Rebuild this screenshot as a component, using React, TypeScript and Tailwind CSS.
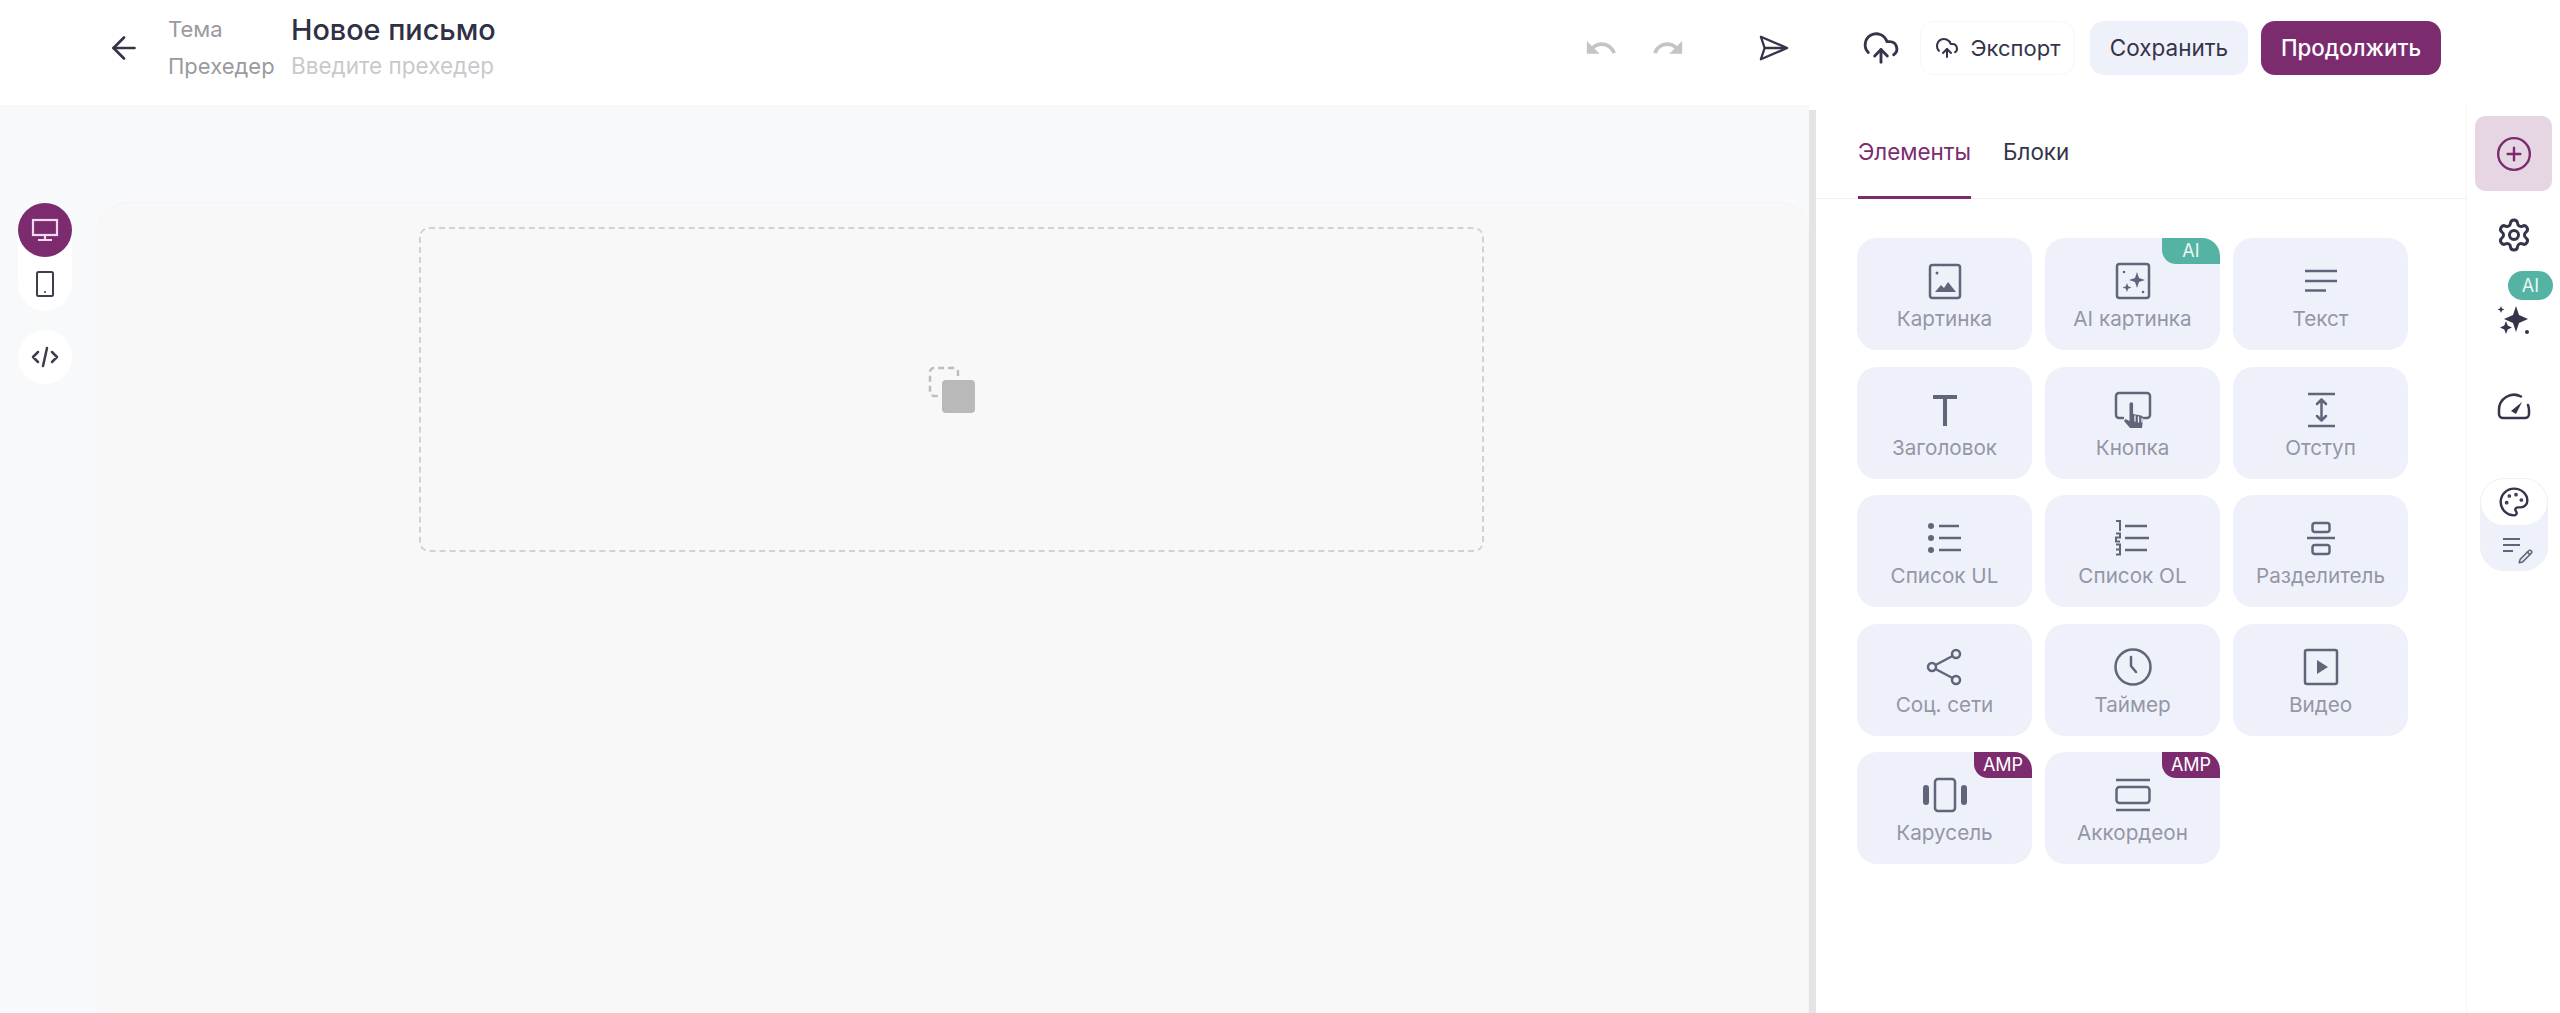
import React from 'react';
import { ArrowLeft, CloudUpload, CirclePlus, Settings, Palette, Pencil } from 'lucide-react';
import { MdUndo, MdRedo } from 'react-icons/md';

const ico = { fill: 'none', stroke: 'currentColor', strokeWidth: 2.5, strokeLinecap: 'round' as const, strokeLinejoin: 'round' as const };

const Svg: React.FC<{ children: React.ReactNode }> = ({ children }) => (
  <svg width="40" height="40" viewBox="0 0 40 40" {...ico}>{children}</svg>
);

const tileIcons: Record<string, React.ReactNode> = {
  image: (
    <Svg>
      <rect x="5" y="4" width="30" height="33" rx="2.5" />
      <circle cx="12" cy="12" r="1.5" fill="currentColor" stroke="none" />
      <path d="M10 31l6-7 3 3 4-6 8 10z" fill="currentColor" stroke="none" />
    </Svg>
  ),
  aiImage: (
    <Svg>
      <rect x="4" y="3" width="32" height="34" rx="2.5" />
      <path d="M24 11l2 6 6 2-6 2-2 6-2-6-6-2 6-2z" fill="currentColor" stroke="none" />
      <path d="M14 22l1.2 3.3 3.3 1.2-3.3 1.2L14 31l-1.2-3.3-3.3-1.2 3.3-1.2z" fill="currentColor" stroke="none" />
      <circle cx="11" cy="11" r="1.3" fill="currentColor" stroke="none" />
      <circle cx="30" cy="31" r="1.3" fill="currentColor" stroke="none" />
    </Svg>
  ),
  text: (
    <Svg>
      <path d="M4 10h32M4 20h32M4 29.500h21" strokeLinecap="butt" />
    </Svg>
  ),
  heading: (
    <Svg>
      <path d="M8 7h24M20 7v29" strokeWidth="4" strokeLinecap="butt" />
    </Svg>
  ),
  button: (
    <Svg>
      <path d="M10 28H6a3 3 0 0 1-3-3V6a3 3 0 0 1 3-3h28a3 3 0 0 1 3 3v19a3 3 0 0 1-3 3h-3" />
      <path d="M17 38l-6-7 1.500-2 4 2V14a1.800 1.800 0 0 1 3.600 0v10l8 1.500c1.500.3 2.200 1.500 2 3L29 38z" fill="currentColor" stroke="none" />
      <path d="M22 31v-5M25.500 32v-5M29 32v-3.500" stroke="#eff1fa" strokeWidth="1.300" />
    </Svg>
  ),
  spacing: (
    <Svg>
      <path d="M7 4h27M7 36h27" strokeLinecap="butt" />
      <path d="M20.500 10v20M16 14l4.500-4.500L25 14M16 26l4.500 4.500L25 26" />
    </Svg>
  ),
  ul: (
    <Svg>
      <circle cx="6" cy="8" r="3" fill="currentColor" stroke="none" />
      <circle cx="6" cy="20" r="3" fill="currentColor" stroke="none" />
      <circle cx="6" cy="32" r="3" fill="currentColor" stroke="none" />
      <path d="M14 8h20M14 20h22M14 32h22" strokeLinecap="butt" />
    </Svg>
  ),
  ol: (
    <Svg>
      <path d="M3 3h4v10M3 15.500h4v4H3v4h4M3 26.500h4v10H3M3 31.500h4" strokeWidth="2" strokeLinecap="butt" strokeLinejoin="miter" />
      <path d="M12 8h22M12 20h24M12 32h22" strokeLinecap="butt" />
    </Svg>
  ),
  divider: (
    <Svg>
      <rect x="11.500" y="5" width="17" height="9" rx="2.500" />
      <path d="M6 20h28" strokeLinecap="butt" />
      <rect x="11.500" y="27" width="17" height="9" rx="2.500" />
    </Svg>
  ),
  share: (
    <Svg>
      <circle cx="31" cy="7" r="4" />
      <circle cx="7" cy="20" r="4" />
      <circle cx="31" cy="33" r="4" />
      <path d="M27.500 9L10.500 18M10.500 22l17 9" />
    </Svg>
  ),
  timer: (
    <Svg>
      <circle cx="20" cy="20" r="17.500" />
      <path d="M18 10v9l5 6" />
    </Svg>
  ),
  video: (
    <Svg>
      <rect x="4" y="3" width="32" height="34" rx="2" />
      <path d="M16 13l11 7-11 7z" fill="currentColor" stroke="none" />
    </Svg>
  ),
  carousel: (
    <svg width="46" height="40" viewBox="0 0 46 40" {...ico}>
      <rect x="13" y="4" width="20" height="32" rx="3" />
      <rect x="1" y="10" width="6" height="20" rx="3" fill="currentColor" stroke="none" />
      <rect x="39" y="10" width="6" height="20" rx="3" fill="currentColor" stroke="none" />
    </svg>
  ),
  accordion: (
    <svg width="40" height="40" viewBox="0 0 40 40" {...ico}>
      <path d="M3 5h34M3 35h34" strokeLinecap="butt" />
      <rect x="3.500" y="12" width="33" height="16" rx="3" />
    </svg>
  ),
};

const tiles = [
  { label: 'Картинка', icon: 'image' },
  { label: 'AI картинка', icon: 'aiImage', badge: 'AI' },
  { label: 'Текст', icon: 'text' },
  { label: 'Заголовок', icon: 'heading' },
  { label: 'Кнопка', icon: 'button' },
  { label: 'Отступ', icon: 'spacing' },
  { label: 'Список UL', icon: 'ul' },
  { label: 'Список OL', icon: 'ol' },
  { label: 'Разделитель', icon: 'divider' },
  { label: 'Соц. сети', icon: 'share' },
  { label: 'Таймер', icon: 'timer' },
  { label: 'Видео', icon: 'video' },
  { label: 'Карусель', icon: 'carousel', badge: 'AMP' },
  { label: 'Аккордеон', icon: 'accordion', badge: 'AMP' },
];

const Header: React.FC = () => (
  <div className="flex h-[105px] shrink-0 items-center bg-white pb-[9px] pl-[106px] pr-[119px]">
    <ArrowLeft className="w-[36px] h-[36px] text-[#34344a]" strokeWidth={1.800} />
    <div className="ml-[26px] flex w-[123px] flex-col text-[22px] text-[#9a9a9f]">
      <div className="h-[37px] leading-[37px] -mt-[2px]">Тема</div>
      <div className="h-[36px] leading-[36px]">Прехедер</div>
    </div>
    <div className="flex flex-col w-[300px]">
      <div className="h-[37px] leading-[37px] -mt-[2px] text-[28.800px] font-medium text-[#2f2f45]">Новое письмо</div>
      <div className="h-[36px] leading-[36px] text-[22.500px] text-[#c9c9cc]">Введите прехедер</div>
    </div>
    <div className="flex-1" />
    <MdUndo className="w-[34px] h-[34px] text-[#c4c4c8]" />
    <MdRedo className="ml-[33px] w-[34px] h-[34px] text-[#c4c4c8]" />
    <svg className="ml-[74px] text-[#34344a]" width="30" height="30" viewBox="0 0 32 32" fill="none" stroke="currentColor" strokeWidth="2.500" strokeLinejoin="round">
      <path d="M2 4l28 12L2 28l4-12zM6 16h24" />
    </svg>
    <CloudUpload className="ml-[73px] w-[38px] h-[38px] text-[#34344a]" strokeWidth={1.800} />
    <div className="ml-[20px] flex h-[54px] w-[155px] items-center justify-center gap-[12px] rounded-[14px] border border-[#f6f6f8] bg-white text-[22px] text-[#34344a]">
      <CloudUpload className="w-[24px] h-[24px]" strokeWidth={2} />
      Экспорт
    </div>
    <div className="ml-[15px] flex h-[54px] w-[158px] items-center justify-center rounded-[14px] bg-[#eff1fa] text-[22.500px] text-[#34344a]">
      Сохранить
    </div>
    <div className="ml-[13px] flex h-[54px] w-[180px] items-center justify-center rounded-[14px] bg-[#7c2b6f] text-[22.300px] font-medium text-white">
      Продолжить
    </div>
  </div>
);

const Canvas: React.FC = () => (
  <div className="flex flex-1 bg-[#f8f9fb]">
    <div className="w-[97px] shrink-0 pl-[18px] pt-[98px]">
      <div className="w-[54px] h-[108px] rounded-full bg-white">
        <div className="flex w-[54px] h-[54px] items-center justify-center rounded-full bg-[#7c2b6f] text-[#f3d9ee]">
          <svg width="28" height="24" viewBox="0 0 28 24" fill="none" stroke="currentColor" strokeWidth="2.200">
            <rect x="2" y="2" width="24" height="15" />
            <path d="M14 17v4M7 22h14" />
          </svg>
        </div>
        <div className="flex w-[54px] h-[54px] items-center justify-center text-[#3d3d4e]">
          <svg width="20" height="28" viewBox="0 0 20 28" fill="none" stroke="currentColor" strokeWidth="2">
            <rect x="2" y="2" width="16" height="24" rx="1.500" />
            <circle cx="10" cy="22" r="1" fill="currentColor" stroke="none" />
          </svg>
        </div>
      </div>
      <div className="mt-[19px] flex w-[54px] h-[54px] items-center justify-center rounded-full bg-white text-[#3d3d4e]">
        <svg width="28" height="24" viewBox="0 0 28 24" fill="none" stroke="currentColor" strokeWidth="2.500" strokeLinecap="round" strokeLinejoin="round">
          <path d="M7 7l-5 5 5 5M21 7l5 5-5 5M16 3l-4 18" />
        </svg>
      </div>
    </div>
    <div className="flex-1 mt-[97px] rounded-t-[30px] border border-b-0 border-[#f4f4f6] bg-[#f8f8f8] pt-[24px]">
      <div className="ml-[321px] flex h-[325px] w-[1065px] items-center justify-center rounded-[10px] border-2 border-dashed border-[#d2d2d2]">
        <svg width="48" height="48" viewBox="0 0 48 48" fill="none">
          <path d="M30 10V6a4 4 0 0 0-4-4H6a4 4 0 0 0-4 4v20a4 4 0 0 0 4 4h4" stroke="#bdbdbd" strokeWidth="2.500" strokeDasharray="6 4" />
          <rect x="14" y="14" width="33" height="33" rx="4" fill="#b9b9b9" />
        </svg>
      </div>
    </div>
  </div>
);

const Tile: React.FC<{ label: string; icon: string; badge?: string }> = ({ label, icon, badge }) => (
  <div className="relative flex h-[112px] flex-col items-center rounded-[20px] bg-[#eff1fa] pt-[23px]">
    {badge && (
      <div
        className={
          badge === 'AI'
            ? 'absolute right-0 top-0 flex h-[26px] w-[58px] items-center justify-center rounded-tr-[18px] rounded-bl-[14px] bg-[#55b3a4] text-[18px] leading-none text-[#e9f7f4]'
            : 'absolute right-0 top-0 flex h-[26px] w-[58px] items-center justify-center rounded-tr-[18px] rounded-bl-[14px] bg-[#7c2b6f] text-[18px] leading-none text-white'
        }
      >
        {badge}
      </div>
    )}
    <div className="flex h-[40px] items-center justify-center text-[#62657a]">{tileIcons[icon]}</div>
    <div className="mt-[4px] text-[20.700px] leading-[28px] text-[#9496a6]">{label}</div>
  </div>
);

const Panel: React.FC = () => (
  <div className="w-[650px] shrink-0 bg-white">
    <div className="flex h-[94px] gap-[32px] border-b border-[#f3f3f5] pl-[42px]">
      <div className="relative flex items-start pt-[33px] text-[22.400px] leading-[28px] text-[#7c2b6f]">
        Элементы
        <div className="absolute inset-x-0 bottom-[-1px] h-[3px] bg-[#7c2b6f]" />
      </div>
      <div className="flex items-start pt-[33px] text-[22.400px] leading-[28px] text-[#34344a]">Блоки</div>
    </div>
    <div className="grid grid-cols-3 gap-x-[13px] gap-y-[16.500px] pl-[41px] pr-[58px] pt-[39px]">
      {tiles.map((t) => (
        <Tile key={t.label} {...t} />
      ))}
    </div>
  </div>
);

const Rail: React.FC = () => (
  <div className="flex w-[94px] shrink-0 flex-col items-center border-l border-[#f6f6f7] bg-white pt-[11px]">
    <div className="flex h-[75px] w-[77px] items-center justify-center rounded-[10px] bg-[#e6d6e3] text-[#7c2b6f]">
      <CirclePlus className="w-[38px] h-[38px]" strokeWidth={1.500} />
    </div>
    <Settings className="mt-[26px] w-[36px] h-[36px] text-[#34344a]" strokeWidth={2} />
    <div className="relative mt-[18px] flex h-[84px] w-full justify-center">
      <div className="absolute left-[41px] top-0 flex h-[29px] w-[45px] items-center justify-center rounded-full bg-[#55b3a4] text-[18px] leading-none text-[#e9f7f4]">
        AI
      </div>
      <svg className="mt-[33px] text-[#34344a]" width="34" height="32" viewBox="0 0 34 32" fill="currentColor">
        <path d="M19 2l3 9 9 4-9 4-3 9-3-9-9-4 9-4z" />
        <path d="M9 17l1.700 4.500L15 23.500l-4.300 2L9 30l-1.700-4.500-4.300-2 4.300-2z" />
        <path d="M4 2l1 2.500L7.500 5.500 5 6.500 4 9 3 6.500.5 5.500 3 4.500z" />
        <circle cx="30" cy="28" r="2" />
      </svg>
    </div>
    <svg className="mt-[38px] text-[#34344a]" width="34" height="28" viewBox="0 0 34 28" fill="none" stroke="currentColor" strokeWidth="2.500" strokeLinecap="round">
      <path d="M24 3.500A15 15 0 0 0 2 17v4a4 4 0 0 0 4 4h22a4 4 0 0 0 4-4v-4a15 15 0 0 0-1-5" />
      <path d="M14 18l11-9-6 12z" fill="currentColor" stroke="none" />
    </svg>
    <div className="mt-[57px] w-[68px] h-[93px] rounded-[24px] border border-[#f1f1f4] bg-[#eff1fa]">
      <div className="flex h-[46px] items-center justify-center rounded-[24px] bg-white">
        <Palette className="w-[32px] h-[32px] text-[#34344a]" strokeWidth={1.800} />
      </div>
      <div className="relative flex h-[47px] items-center justify-center text-[#62657a]">
        <svg className="ml-[6px]" width="30" height="28" viewBox="0 0 30 28" fill="none" stroke="currentColor" strokeWidth="2">
          <path d="M1 4h17M1 10h17M1 16h10" />
        </svg>
        <Pencil className="absolute left-[37px] top-[24px] w-[15px] h-[15px]" strokeWidth={2.500} />
      </div>
    </div>
  </div>
);

export default function App() {
  return (
    <div className="flex h-screen flex-col overflow-hidden bg-white font-['Inter',sans-serif]">
      <Header />
      <div className="flex flex-1 overflow-hidden">
        <Canvas />
        <div className="mt-[5px] w-[7px] shrink-0 bg-[#e4e4e4]" />
        <Panel />
        <Rail />
      </div>
    </div>
  );
}
